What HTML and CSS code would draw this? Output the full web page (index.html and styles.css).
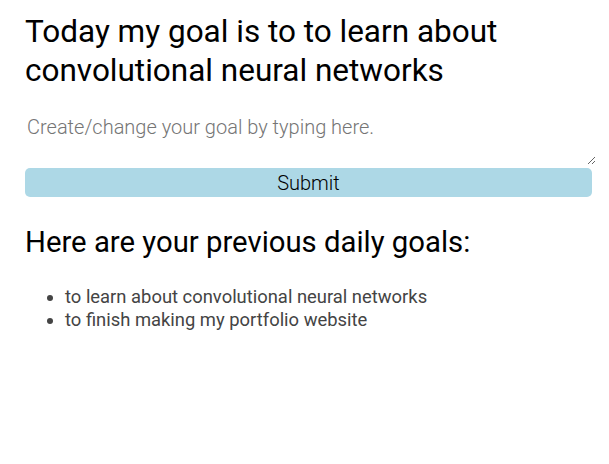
FILE: index.html
```html
<!DOCTYPE html>
<html>
<head>
<meta charset="utf-8">
<link rel="stylesheet" href="styles.css">
</head>
<body>
<div class="page">
  <h1 class="goal">Today my goal is to to learn about convolutional neural networks</h1>
  <form class="goal-form">
    <textarea class="goal-input" placeholder="Create/change your goal by typing here."></textarea>
    <button class="submit" type="button">Submit</button>
  </form>
  <h2 class="prev-title">Here are your previous daily goals:</h2>
  <ul class="prev-list">
    <li>to learn about convolutional neural networks</li>
    <li>to finish making my portfolio website</li>
  </ul>
</div>
</body>
</html>
```
FILE: styles.css
```css
html, body {
  margin: 0;
  padding: 0;
  background: #fff;
}
.page {
  width: 567px;
  padding: 13px 0 0 25px;
  font-family: Roboto, "Liberation Sans", sans-serif;
}
.goal {
  margin: 0;
  font-size: 31.5px;
  font-weight: 400;
  line-height: 38.5px;
  color: #000;
}
.goal-form {
  display: flex;
  flex-direction: column;
  margin-top: 23px;
}
.goal-input {
  width: 100%;
  box-sizing: content-box;
  border: none;
  outline: none;
  padding: 2px;
  height: 48px;
  font-family: Roboto, "Liberation Sans", sans-serif;
  font-size: 20px;
  font-weight: 300;
  color: #000;
  resize: both;
}
.goal-input::placeholder {
  color: #757575;
}
.submit {
  margin-top: 3px;
  height: 29px;
  border: none;
  border-radius: 5px;
  background: #add8e6;
  font-family: Roboto, "Liberation Sans", sans-serif;
  font-size: 20px;
  font-weight: 300;
  color: #000;
  padding: 0;
}
.prev-title {
  margin: 28px 0 0;
  font-size: 29.3px;
  font-weight: 400;
  line-height: 35px;
  color: #000;
}
.prev-list {
  margin: 25px 0 0;
  padding-left: 40px;
  font-size: 18.4px;
  font-weight: 400;
  line-height: 23px;
  color: #444;
}
```
